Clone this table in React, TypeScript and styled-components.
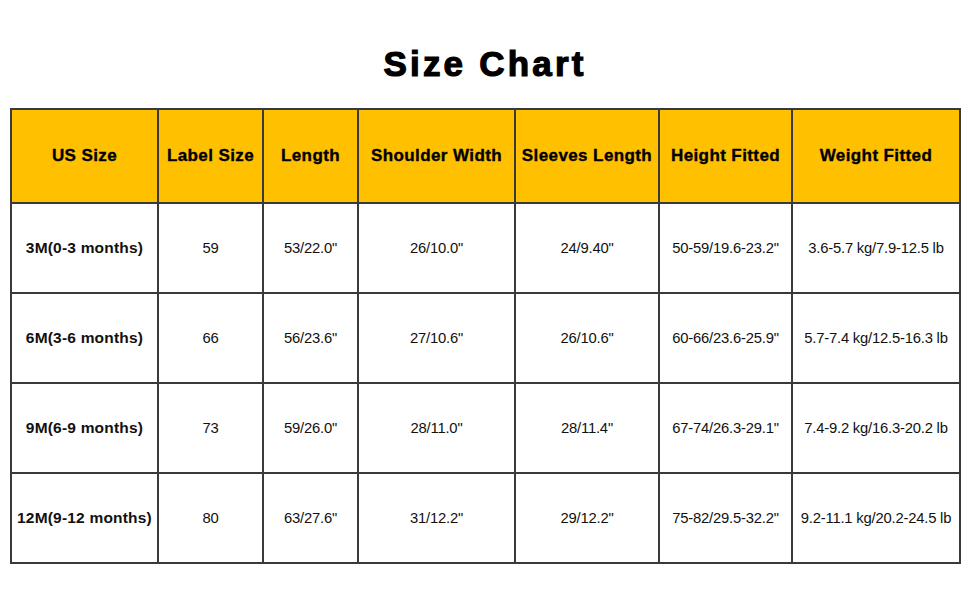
import React from "react";
import styled, { createGlobalStyle } from "styled-components";

const GlobalStyle = createGlobalStyle`
  html, body {
    margin: 0;
    padding: 0;
    background: #ffffff;
  }
  body {
    font-family: "Liberation Sans", Arial, sans-serif;
    color: #111;
  }
`;

const columns = [
  { title: "US Size", width: 147 },
  { title: "Label Size", width: 105 },
  { title: "Length", width: 95 },
  { title: "Shoulder Width", width: 157 },
  { title: "Sleeves Length", width: 144 },
  { title: "Height Fitted", width: 133 },
  { title: "Weight Fitted", width: 168 },
];

const rows = [
  ["3M(0-3 months)", "59", "53/22.0\"", "26/10.0\"", "24/9.40\"", "50-59/19.6-23.2\"", "3.6-5.7 kg/7.9-12.5 lb"],
  ["6M(3-6 months)", "66", "56/23.6\"", "27/10.6\"", "26/10.6\"", "60-66/23.6-25.9\"", "5.7-7.4 kg/12.5-16.3 lb"],
  ["9M(6-9 months)", "73", "59/26.0\"", "28/11.0\"", "28/11.4\"", "67-74/26.3-29.1\"", "7.4-9.2 kg/16.3-20.2 lb"],
  ["12M(9-12 months)", "80", "63/27.6\"", "31/12.2\"", "29/12.2\"", "75-82/29.5-32.2\"", "9.2-11.1 kg/20.2-24.5 lb"],
];

const Page = styled.div`
  width: 970px;
  height: 600px;
  padding-top: 40px;
  box-sizing: border-box;
`;

const Title = styled.h1`
  margin: 0 0 20px 0;
  height: 48px;
  line-height: 48px;
  text-align: center;
  font-family: "Liberation Sans", Arial, sans-serif;
  font-size: 35px;
  font-weight: 700;
  letter-spacing: 3.2px;
  color: #000;
  -webkit-text-stroke: 1.2px #000;
`;

const Chart = styled.table`
  margin-left: 10px;
  width: 951px;
  table-layout: fixed;
  border-collapse: collapse;
  border: 2px solid #3a3a3a;
`;

const HeadCell = styled.th`
  height: 92px;
  padding: 0;
  background: #ffc000;
  border: 2px solid #3a3a3a;
  text-align: center;
  vertical-align: middle;
  font-size: 17px;
  font-weight: 700;
  letter-spacing: 0.4px;
  color: #000;
  -webkit-text-stroke: 0.35px #000;
  white-space: nowrap;
`;

const Cell = styled.td<{ $bold?: boolean }>`
  height: 88px;
  padding: 0;
  border: 2px solid #3a3a3a;
  text-align: center;
  vertical-align: middle;
  font-size: ${(p) => (p.$bold ? "15.5px" : "14.8px")};
  font-weight: ${(p) => (p.$bold ? 700 : 400)};
  letter-spacing: ${(p) => (p.$bold ? "0.2px" : "-0.2px")};
  color: #111;
  white-space: nowrap;
`;

const App: React.FC = () => {
  return (
    <Page>
      <GlobalStyle />
      <Title>Size Chart</Title>
      <Chart>
        <colgroup>
          {columns.map((c) => (
            <col key={c.title} style={{ width: c.width }} />
          ))}
        </colgroup>
        <thead>
          <tr>
            {columns.map((c) => (
              <HeadCell key={c.title}>{c.title}</HeadCell>
            ))}
          </tr>
        </thead>
        <tbody>
          {rows.map((r) => (
            <tr key={r[0]}>
              {r.map((v, i) => (
                <Cell key={i} $bold={i === 0}>
                  {v}
                </Cell>
              ))}
            </tr>
          ))}
        </tbody>
      </Chart>
    </Page>
  );
};

export default App;
